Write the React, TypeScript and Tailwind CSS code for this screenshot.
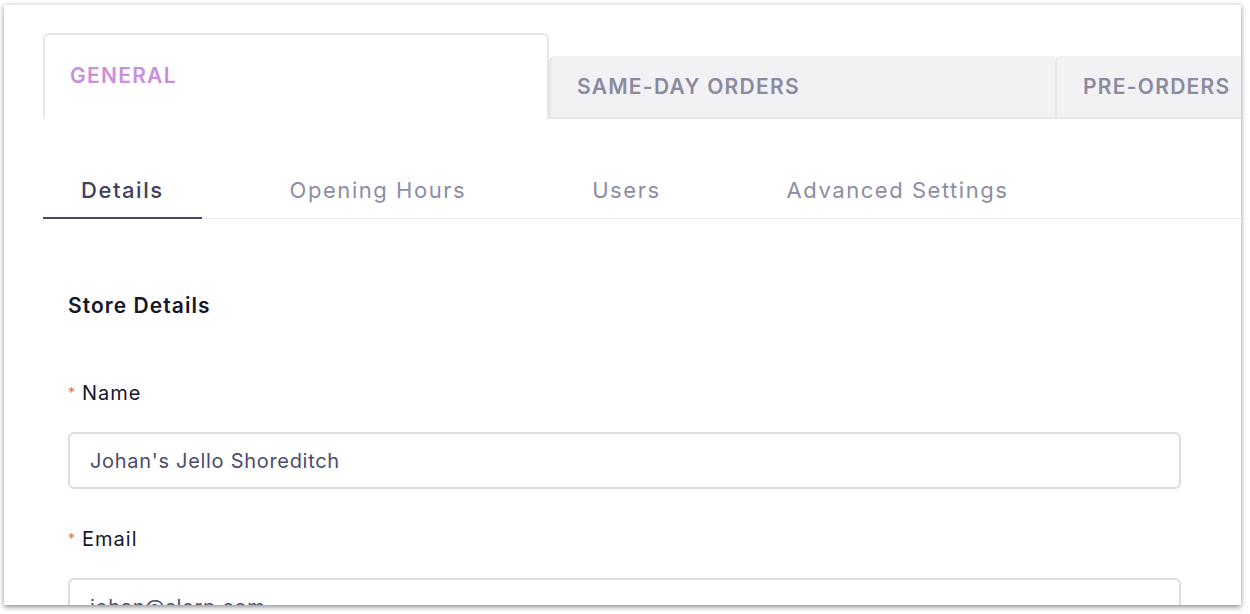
import React from "react";

const topTabs = [
  { label: "GENERAL", active: true },
  { label: "SAME-DAY ORDERS", active: false },
  { label: "PRE-ORDERS", active: false },
];

const subTabs = ["Details", "Opening Hours", "Users", "Advanced Settings"];

function Field({ label, value }: { label: string; value: string }) {
  return (
    <div>
      <div className="flex items-center text-[20px] leading-[28px] tracking-[0.05em] text-[#16162a]">
        <span className="mr-[6px] text-[14px] text-[#f0625a]">*</span>
        {label}
      </div>
      <div className="mt-[25px] h-[57px] rounded-[6px] border-2 border-[#dcdce1] px-[20px] flex items-center text-[20px] tracking-[0.035em] text-[#4b4b6b]">
        {value}
      </div>
    </div>
  );
}

export default function App() {
  return (
    <div
      className="w-[1250px] h-[614px] bg-white pt-[4px] pl-[4px]"
      style={{ fontFamily: "Inter, 'Noto Sans', sans-serif" }}
    >
      <div className="w-[1237px] h-[601px] overflow-hidden bg-white border-t border-[#e8e8e8] shadow-[0_2px_5px_rgba(0,0,0,0.45)]">
        {/* top tabs */}
        <div className="flex items-end h-[114px] pl-[39px] pt-[28px]">
          {topTabs.map((t) =>
            t.active ? (
              <div
                key={t.label}
                className="w-[506px] h-[86px] shrink-0 rounded-t-[6px] border-2 border-b-0 border-[#e6e6ea] bg-white pl-[25px] pt-[26px] text-[21px] font-semibold leading-[30px] tracking-[0.06em] text-[#c98fdb]"
              >
                {t.label}
              </div>
            ) : (
              <div
                key={t.label}
                className="w-[506px] h-[63px] shrink-0 rounded-tl-[6px] border-l-2 border-b-2 border-[#e6e6ea] bg-[#f2f2f4] pl-[26px] pt-[16px] text-[21px] font-semibold leading-[30px] tracking-[0.06em] text-[#8b8b9f]"
              >
                {t.label}
              </div>
            )
          )}
        </div>

        {/* sub tabs */}
        <div className="ml-[39px] mt-[52px] flex border-b border-[#ebebef]">
          {subTabs.map((s, i) => (
            <div
              key={s}
              className={
                i === 0
                  ? "mr-[50px] -mb-px border-b-2 border-[#46466a] px-[38px] pt-[4px] pb-[12px] text-[22px] font-medium leading-[30px] tracking-[0.07em] text-[#3f3f5f]"
                  : "mr-[50px] -mb-px border-b-2 border-transparent px-[38px] pt-[4px] pb-[12px] text-[22px] leading-[30px] tracking-[0.07em] text-[#8d8da3]"
              }
            >
              {s}
            </div>
          ))}
        </div>

        {/* form */}
        <div className="pl-[64px] pr-[60px]">
          <h2 className="mt-[73px] text-[21px] font-semibold leading-[28px] tracking-[0.05em] text-[#16162a]">
            Store Details
          </h2>
          <div className="mt-[59px]">
            <Field label="Name" value="Johan's Jello Shoreditch" />
          </div>
          <div className="mt-[36px]">
            <Field label="Email" value="johan@slerp.com" />
          </div>
        </div>
      </div>
    </div>
  );
}
